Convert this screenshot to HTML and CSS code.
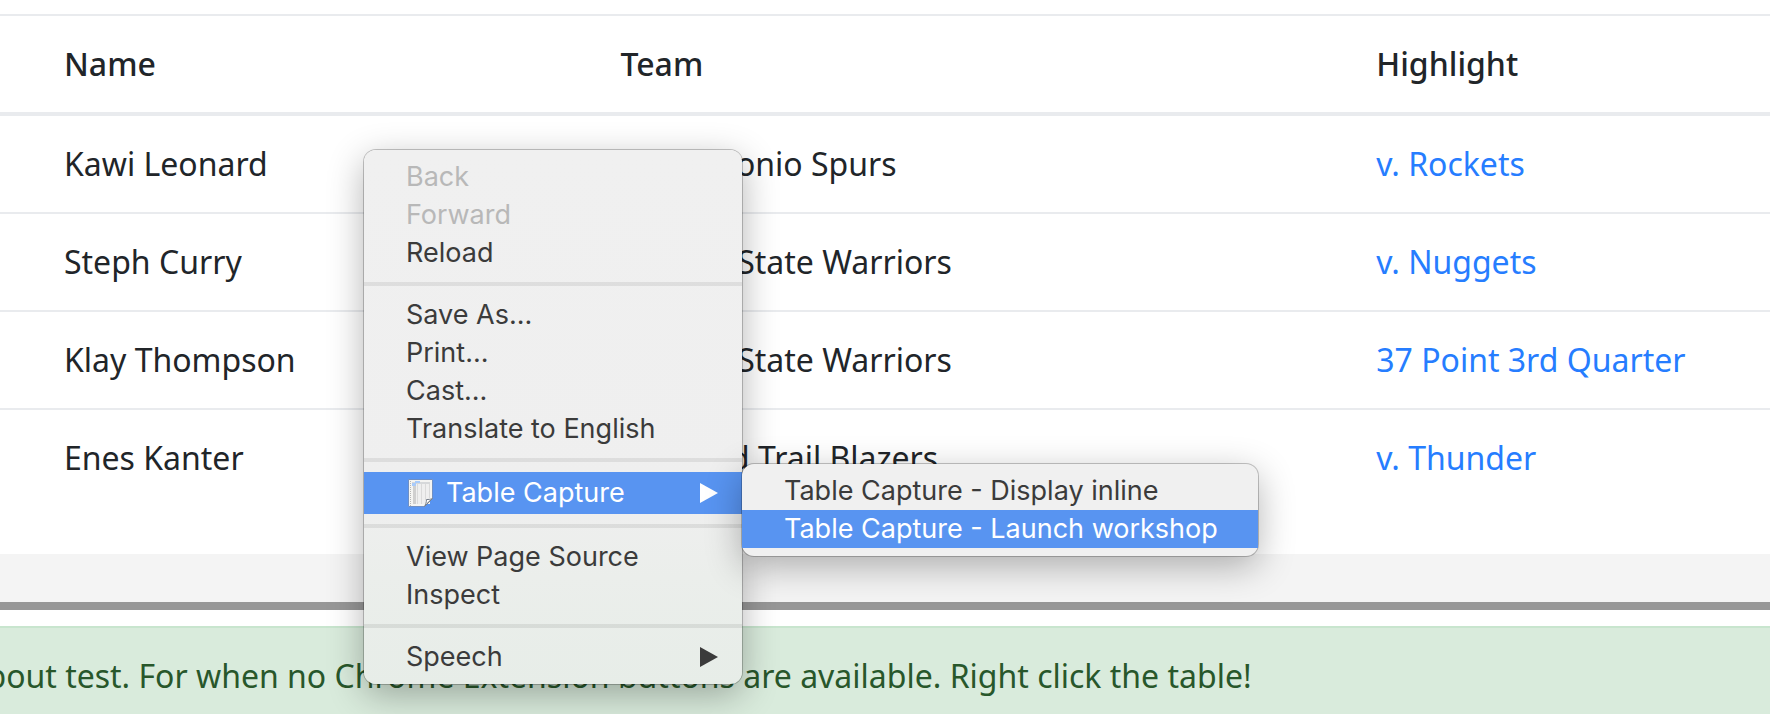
FILE: index.html
```html
<!DOCTYPE html>
<html lang="en">
<head>
<meta charset="utf-8">
<title>Table Capture test</title>
<link rel="stylesheet" href="styles.css">
</head>
<body>
<main class="page">
  <table class="players">
    <thead>
      <tr><th class="col-name">Name</th><th class="col-team">Team</th><th>Highlight</th></tr>
    </thead>
    <tbody>
      <tr><td>Kawi Leonard</td><td>San Antonio Spurs</td><td><a href="#rockets">v. Rockets</a></td></tr>
      <tr><td>Steph Curry</td><td>Golden State Warriors</td><td><a href="#nuggets">v. Nuggets</a></td></tr>
      <tr><td>Klay Thompson</td><td>Golden State Warriors</td><td><a href="#quarter">37 Point 3rd Quarter</a></td></tr>
      <tr><td>Enes Kanter</td><td>Portland Trail Blazers</td><td><a href="#thunder">v. Thunder</a></td></tr>
    </tbody>
  </table>
  <div class="band"></div>
  <p class="alert">About test. For when no Chrome Extension buttons are available. Right click the table!</p>
</main>

<div class="menu menu-main" role="menu">
  <button class="item" role="menuitem" disabled>Back</button>
  <button class="item" role="menuitem" disabled>Forward</button>
  <button class="item" role="menuitem">Reload</button>
  <hr class="rule">
  <button class="item" role="menuitem">Save As...</button>
  <button class="item" role="menuitem">Print...</button>
  <button class="item" role="menuitem">Cast...</button>
  <button class="item" role="menuitem">Translate to English</button>
  <hr class="rule">
  <button class="item item-tall active" role="menuitem" aria-haspopup="true" aria-expanded="true">
    <svg class="sheet" viewBox="-1 0 28 32" aria-hidden="true">
      <path d="M1.500 2.500h24v19l-8 8h-16z" fill="#f4f4f2" stroke="#6f8fc4"/>
      <path d="M6 5h17v22H6z" fill="#efefef"/>
      <path d="M5 5h18v2H5z" fill="#d6d8da"/>
      <path d="M6 7h3v20H6z" fill="#cfcfcf"/>
      <path d="M8 4h5v2H8zM5 6h4v3H5z" fill="#a9cbfa"/>
      <path d="M10.500 7v20M14.500 7v20M18.500 7v16M22.500 7v14" stroke="#dadada" fill="none"/>
      <path d="M3.500 4v25" stroke="#b5b5b5" stroke-dasharray="1 1" fill="none"/>
      <path d="M25.500 21.500c-2 1-4 1-6 1 0 3-1 5-2 7z" fill="#fff" stroke="#77808c"/>
      <path d="M19 27l4-4" stroke="#c4c4c4"/>
    </svg>
    <span class="label">Table Capture</span>
    <svg class="arrow" viewBox="0 0 18 20" aria-hidden="true"><path d="M0 0l18 10L0 20z" fill="currentColor"/></svg>
  </button>
  <hr class="rule">
  <button class="item" role="menuitem">View Page Source</button>
  <button class="item" role="menuitem">Inspect</button>
  <hr class="rule">
  <button class="item" role="menuitem" aria-haspopup="true">
    <span class="label">Speech</span>
    <svg class="arrow" viewBox="0 0 18 20" aria-hidden="true"><path d="M0 0l18 10L0 20z" fill="currentColor"/></svg>
  </button>
</div>

<div class="menu menu-sub" role="menu">
  <button class="item" role="menuitem">Table Capture - Display inline</button>
  <button class="item active" role="menuitem">Table Capture - Launch workshop</button>
</div>
</body>
</html>
```
FILE: styles.css
```css
* {
  box-sizing: border-box;
}

body {
  margin: 0;
  height: 100vh;
  overflow: hidden;
  position: relative;
  background: #fff;
  color: #212529;
  font: 32px/48px "Noto Sans", sans-serif;
}

.page {
  padding-top: 14px;
}

.players {
  width: 100%;
  table-layout: fixed;
  border-collapse: separate;
  border-spacing: 0;
  margin-bottom: 48px;
}

.players th,
.players td {
  padding: 24px;
  border-top: 2px solid #e9ebee;
  text-align: left;
  font-weight: 400;
  white-space: nowrap;
}

.players th {
  border-bottom: 2px solid #e9ebee;
  font-weight: 500;
}

.players th:first-child,
.players td:first-child {
  padding-left: 64px;
}

.col-name {
  width: 33.7%;
}

.col-team {
  width: 42.7%;
}

.players a {
  color: #267dff;
  text-decoration: none;
}

.band {
  height: 56px;
  background: #f4f4f4;
  border-bottom: 8px solid #979797;
}

.alert {
  margin: 16px -24px 0 -60px;
  padding: 24px;
  border: 2px solid #c8e5ce;
  background: #d9ebdc;
  color: #28572b;
  white-space: nowrap;
}

.menu {
  position: absolute;
  display: flex;
  flex-direction: column;
  padding: 8px 0;
  border-radius: 12px;
  background: #f0f0f0;
  box-shadow: 0 0 0 1px rgba(0, 0, 0, 0.22), 0 10px 36px rgba(0, 0, 0, 0.3);
}

.menu-main {
  left: 364px;
  top: 150px;
  width: 378px;
  background: linear-gradient(#f0f0f0 0, #efefef 65%, #ebeeeb 80%, #e7ede8 100%);
}

.menu-sub {
  left: 742px;
  top: 464px;
  width: 516px;
}

.item {
  display: flex;
  align-items: center;
  height: 38px;
  margin: 0;
  padding: 0 24px 0 42px;
  border: 0;
  background: none;
  color: #3b3b3b;
  font: 27px/38px Inter, sans-serif;
  text-align: left;
  white-space: nowrap;
}

.item:disabled {
  color: #b8b8b8;
}

.item-tall {
  height: 42px;
}

.item.active {
  background: #5894f1;
  color: #fff;
}

.rule {
  width: 100%;
  height: 4px;
  margin: 10px 0;
  border: 0;
  background: rgba(0, 0, 0, 0.075);
}

.label {
  flex: 1;
}

.sheet {
  width: 28px;
  height: 32px;
  margin-right: 12px;
}

.arrow {
  width: 18px;
  height: 20px;
}
```
